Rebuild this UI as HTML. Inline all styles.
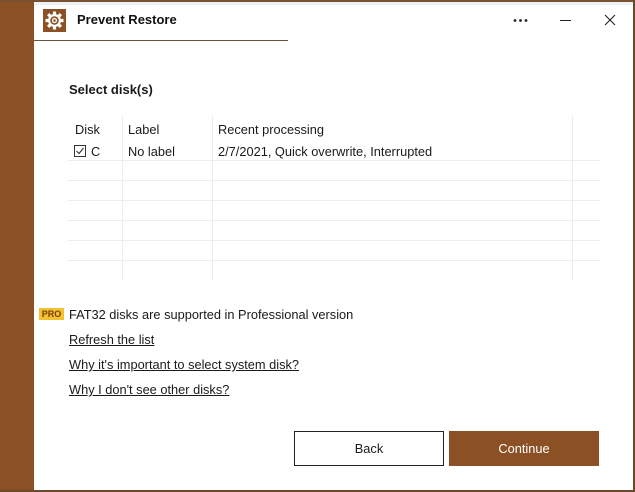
<!DOCTYPE html>
<html><head><style>
*{margin:0;padding:0;box-sizing:border-box}
body{width:635px;height:492px;position:relative;background:#fff;font-family:"Liberation Sans",sans-serif;font-size:12.8px;color:#1a1a1a;overflow:hidden}
.abs{position:absolute}
.line{position:absolute;background:#ececec}
</style></head><body>
<div class="abs" style="left:0;top:0;width:34px;height:492px;background:#8b5124"></div>
<div class="abs" style="left:0;top:0;width:635px;height:2px;background:#7a5230"></div>
<div class="abs" style="right:0;top:0;width:2px;height:492px;background:#6b4a2c"></div>
<div class="abs" style="left:0;bottom:0;width:635px;height:2px;background:#6b4a2c"></div>
<div class="abs" style="left:34px;top:2px;width:599px;height:3px;background:#eef2f6"></div>
<svg class="abs" style="left:43px;top:9px" width="23" height="23" viewBox="0 0 23 23">
<rect width="23" height="23" fill="#8b5124"/>
<g fill="#fff" transform="translate(11.5 11.5)">
<circle r="6.5"/>
<g><rect x="-1.6" y="-9" width="3.2" height="18"/><rect x="-1.6" y="-9" width="3.2" height="18" transform="rotate(45)"/><rect x="-1.6" y="-9" width="3.2" height="18" transform="rotate(90)"/><rect x="-1.6" y="-9" width="3.2" height="18" transform="rotate(135)"/></g>
<circle r="4.3" fill="#8b5124"/><circle r="2.6" fill="#fff"/><circle r="1.3" fill="#8b5124"/>
</g></svg>
<div class="abs" style="left:77px;top:12px;font-weight:bold;font-size:13px;color:#111">Prevent Restore</div>
<div class="abs" style="left:34px;top:40px;width:254px;height:1px;background:#6b5540"></div>
<svg class="abs" style="left:513px;top:18px" width="16" height="5"><circle cx="2" cy="2.5" r="1.4" fill="#222"/><circle cx="7.5" cy="2.5" r="1.4" fill="#222"/><circle cx="13" cy="2.5" r="1.4" fill="#222"/></svg>
<div class="abs" style="left:560px;top:20px;width:11px;height:1px;background:#222"></div>
<svg class="abs" style="left:604px;top:14px" width="12" height="12"><path d="M1 1L11 11M11 1L1 11" stroke="#222" stroke-width="1.1"/></svg>
<div class="abs" style="left:69px;top:82px;font-weight:bold;font-size:13px">Select disk(s)</div>
<div class="line" style="left:122px;top:116px;width:1px;height:164px"></div>
<div class="line" style="left:212px;top:116px;width:1px;height:164px"></div>
<div class="line" style="left:572px;top:116px;width:1px;height:164px"></div>
<div class="line" style="left:68px;top:160px;width:532px;height:1px"></div>
<div class="line" style="left:68px;top:180px;width:532px;height:1px"></div>
<div class="line" style="left:68px;top:200px;width:532px;height:1px"></div>
<div class="line" style="left:68px;top:220px;width:532px;height:1px"></div>
<div class="line" style="left:68px;top:240px;width:532px;height:1px"></div>
<div class="line" style="left:68px;top:260px;width:532px;height:1px"></div>
<div class="abs" style="left:75px;top:122px">Disk</div>
<div class="abs" style="left:128px;top:122px">Label</div>
<div class="abs" style="left:218px;top:122px">Recent processing</div>
<svg class="abs" style="left:74px;top:145px" width="12" height="12"><rect x="0.5" y="0.5" width="11" height="11" fill="#fff" stroke="#333"/><path d="M2.5 6L5 8.5L9.5 3" stroke="#333" fill="none" stroke-width="1.1"/></svg>
<div class="abs" style="left:91px;top:144px">C</div>
<div class="abs" style="left:128px;top:144px">No label</div>
<div class="abs" style="left:218px;top:144px">2/7/2021, Quick overwrite, Interrupted</div>
<div class="abs" style="left:39px;top:308px;width:25px;height:12px;background:#f2c230;font-size:9px;font-weight:bold;color:#7a3e0a;text-align:center;line-height:12px">PRO</div>
<div class="abs" style="left:69px;top:307px">FAT32 disks are supported in Professional version</div>
<div class="abs" style="left:69px;top:332px;text-decoration:underline">Refresh the list</div>
<div class="abs" style="left:69px;top:357px;text-decoration:underline">Why it's important to select system disk?</div>
<div class="abs" style="left:69px;top:382px;text-decoration:underline">Why I don't see other disks?</div>
<div class="abs" style="left:294px;top:431px;width:150px;height:35px;border:1px solid #222;text-align:center;line-height:33px">Back</div>
<div class="abs" style="left:449px;top:431px;width:150px;height:35px;background:#8b5124;color:#fff;text-align:center;line-height:35px">Continue</div>
</body></html>
